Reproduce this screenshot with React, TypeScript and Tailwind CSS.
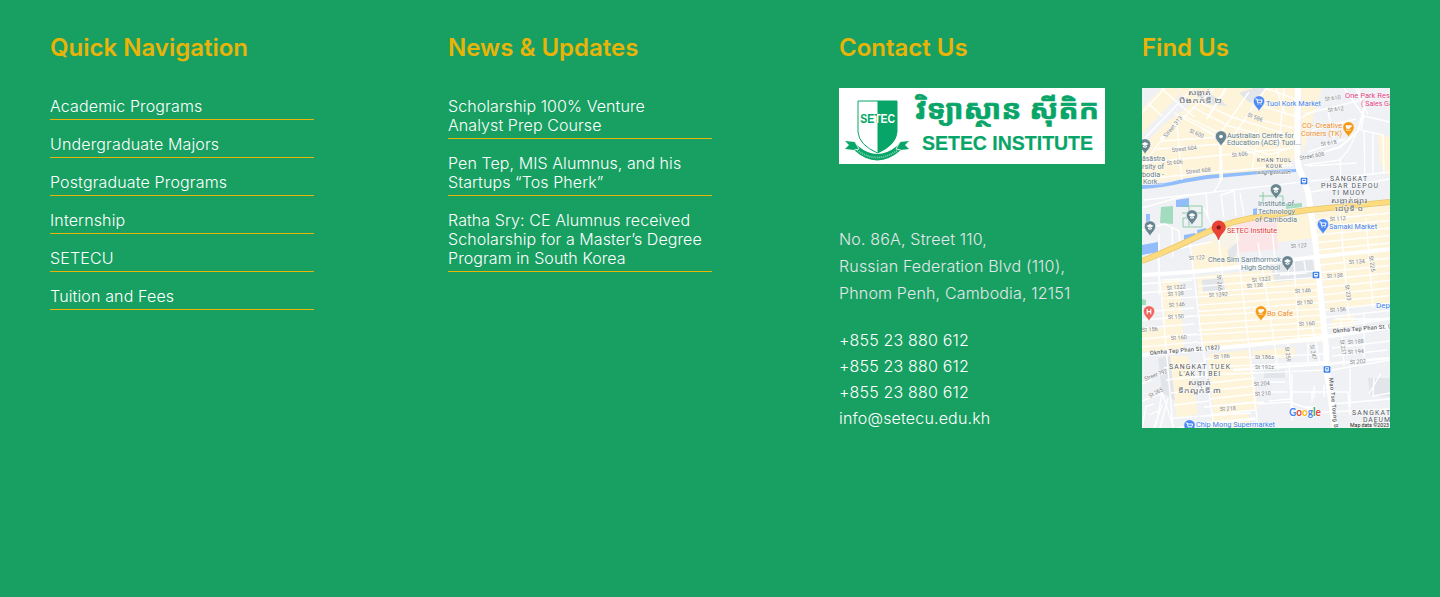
import React from "react";

const links = [
  "Academic Programs",
  "Undergraduate Majors",
  "Postgraduate Programs",
  "Internship",
  "SETECU",
  "Tuition and Fees",
];

const news = [
  ["Scholarship 100% Venture", "Analyst Prep Course"],
  ["Pen Tep, MIS Alumnus, and his", "Startups “Tos Pherk”"],
  ["Ratha Sry: CE Alumnus received", "Scholarship for a Master’s Degree", "Program in South Korea"],
];

const phones = ["+855 23 880 612", "+855 23 880 612", "+855 23 880 612", "info@setecu.edu.kh"];

function Heading({ children }: { children: React.ReactNode }) {
  return <h2 className="text-2xl leading-8 font-semibold text-[#eab308]">{children}</h2>;
}

function Logo() {
  return (
    <svg viewBox="0 0 266 76" className="mt-6 block h-[76px] w-[266px] bg-white">
      <defs>
        <linearGradient id="shield-split" gradientUnits="userSpaceOnUse" x1="38" y1="0" x2="39" y2="0">
          <stop offset="0.5" stopColor="#07a568" />
          <stop offset="0.5" stopColor="#fff" />
        </linearGradient>
      </defs>
      <path d="M19 13H58V44Q57 57 38.5 65Q20 57 19 44Z" fill="#fff" stroke="#07a568" strokeWidth="1" />
      <path d="M38.5 13H58V44Q57 57 38.5 65Z" fill="#07a568" />
      <path d="M6 53L16 54L19 58Q38 74 58 58L61 54L70 53L66 57L70 61L62 62Q38 83 15 62L6 61L10 57Z" fill="#07a568" />
      <path d="M16 54L20 61L15 62M61 54L57 61L62 62" fill="none" stroke="#fff" strokeWidth="0.8" />
      <path d="M18 62Q38 77 59 62" fill="none" stroke="#fff" strokeWidth="2" strokeDasharray="1 1" opacity="0.5" />
      <g fontFamily="Liberation Sans, Arial, sans-serif" fontWeight="700">
        <text x="21.2" y="35" fontSize="13.5" textLength="35" lengthAdjust="spacingAndGlyphs" fill="url(#shield-split)">SETEC</text>
        <text x="83" y="62" fontSize="19.5" textLength="171" lengthAdjust="spacingAndGlyphs" fill="#07a568" stroke="#07a568" strokeWidth="0.2">SETEC INSTITUTE</text>
      </g>
      <text x="76" y="31" fontSize="27" fontWeight="700" fontFamily="Noto Sans Khmer, Noto Sans, sans-serif" textLength="184" lengthAdjust="spacingAndGlyphs" fill="#07a568" stroke="#07a568" strokeWidth="0.6">
        វិទ្យាស្ថាន ស៊ីតិក
      </text>
    </svg>
  );
}

type Label = [text: string, x: number, y: number, width: number, rotate?: number];

const streets: Label[] = [
  ["St 586", 105, 28, 16, 22], ["St 610", 183, 13, 16, -7], ["St 612", 186, 24, 16, -7],
  ["Street 313", 24, 50, 26, -50], ["St 600", 47, 44, 15, 25], ["Street 604", 30, 64, 25, -6],
  ["St 606", 25, 77, 16, -6], ["St 606", 90, 69, 16, -6], ["Street 608", 44, 86, 25, -6],
  ["St 618", 179, 58, 16, -8], ["Street 608", 158, 72, 25, -10],
  ["St 122", 47, 172, 16, -3], ["St 112", 188, 133, 16, -3], ["St 122", 149, 160, 16, -3],
  ["St 134", 207, 176, 16, -3], ["St 1322", 25, 202, 19, -5], ["St 138", 26, 208, 16, -3],
  ["St 1322", 110, 194, 19, -5], ["St 138", 105, 200, 16, -4], ["St 1392", 67, 209, 19, -3],
  ["St 146", 27, 219, 16, -3], ["St 150", 26, 231, 16, -3], ["St 138", 185, 190, 16, -3],
  ["St 146", 153, 205, 16, -3], ["St 150", 155, 217, 16, -4], ["St 156", 188, 224, 16, -3],
  ["St 156", 0, 244, 16, -4], ["St 160", 29, 252, 16, -3], ["St 160", 157, 238, 16, -3],
  ["St 186", 72, 271, 16, -4], ["St 186z", 113, 271, 19], ["St 192z", 113, 281, 19],
  ["St 188", 206, 256, 16, -3], ["St 194", 206, 266, 16, -3], ["St 202", 208, 276, 16, -3],
  ["St 204", 112, 298, 16, -3], ["St 210", 113, 308, 16, -3], ["St 218", 78, 323, 16, -3],
  ["Street 792", 3, 293, 24, -20], ["St 265", 8, 310, 15, -28],
  ["St 265", 75, 187, 16, 86], ["St 225", 227, 168, 16, 82], ["St 233", 203, 197, 16, 82],
  ["St 259", 143, 259, 15, 83], ["St 247", 168, 257, 15, 80], ["St 237", 198, 252, 15, 82],
];

const places: [text: string, x: number, y: number, width: number, color: string][] = [
  ["Tuol Kork Market", 124, 18, 55, "#3f83ef"],
  ["One Park Residence", 203, 10, 67, "#df3d83"],
  ["( Sales Gallery )", 219, 18, 49, "#df3d83"],
  ["CO- Creative", 160, 40, 40, "#f08b20"],
  ["Corners (TK)", 159, 48, 41, "#f08b20"],
  ["Australian Centre for", 85, 50, 67, "#62808c"],
  ["Education (ACE) Tuol...", 85, 57, 74, "#62808c"],
  ["āsāstra", 0, 73, 23, "#62808c"],
  ["rsity of", 0, 81, 22, "#62808c"],
  ["bodia -", 0, 89, 22, "#62808c"],
  ["Kork...", 1, 96, 20, "#62808c"],
  ["Institute of", 116, 118, 36, "#62808c"],
  ["Technology", 116, 126, 37, "#62808c"],
  ["of Cambodia", 113, 134, 42, "#62808c"],
  ["SETEC Institute", 85, 145, 50, "#df3835"],
  ["Samaki Market", 187, 141, 48, "#3f83ef"],
  ["Chea Sim Santhormok", 66, 174, 73, "#62808c"],
  ["High School", 99, 182, 39, "#62808c"],
  ["Bo Café", 125, 228, 26, "#f08b20"],
  ["Depot", 234, 220, 21, "#3f83ef"],
  ["Chip Mong Supermarket", 54, 339, 79, "#3f83ef"],
];

const districts: Label[] = [
  ["SANGKAT", 188, 93, 37], ["PHSAR DEPOU", 179, 100, 57], ["TI MUOY", 190, 107, 33],
  ["SANGKAT TUEK", 27, 281, 61], ["L'AK TI BEI", 37, 288, 41],
  ["SANGKAT", 210, 327, 38], ["DAEUM", 221, 334, 27],
];

const khmer: Label[] = [
  ["សង្កាត់", 46, 7, 23], ["បឹងកក់ទី ២", 37, 15, 43],
  ["សង្កាត់ផ្សារ", 189, 115, 36], ["ដេប៉ូទី ១", 193, 123, 28],
  ["សង្កាត់", 46, 297, 23], ["ទឹកល្អក់ទី ៣", 36, 305, 43],
];

function Pin({ x, y, color, glyph = "dot" }: { x: number; y: number; color: string; glyph?: "dot" | "school" | "cart" | "cup" | "h" }) {
  return (
    <g transform={`translate(${x} ${y})`}>
      <path d="M0 9.5C-1 6-5.7 3.5-5.7-.6A5.7 5.7 0 0 1 5.7-.6C5.7 3.5 1 6 0 9.5Z" fill={color} stroke="#fff" strokeWidth=".6" />
      {glyph === "dot" && <circle r="1.8" cy="-.5" fill="#fff" />}
      {glyph === "school" && <path d="M-3.6-1L0-3L3.6-1L0 1ZM-2 .6V2Q0 3.4 2 2V.6L0 1.8Z" fill="#fff" />}
      {glyph === "cart" && <path d="M-3.3-3H-2L-1.4.8H2.3L3.1-2H-1.7M-1 2.2h.1M2 2.2h.1" fill="none" stroke="#fff" strokeWidth="1" strokeLinecap="round" />}
      {glyph === "cup" && <path d="M-2.7-2.7H3.1V-.8H1.9Q1.7 1-.3 1Q-2.7 1-2.7-1ZM-2.7 1.7H2.2V2.4H-2.7Z" fill="#fff" />}
      {glyph === "h" && <path d="M-1.8-3V2.2M1.8-3V2.2M-1.8-.4H1.8" fill="none" stroke="#fff" strokeWidth="1.1" />}
    </g>
  );
}

function Station({ x, y }: { x: number; y: number }) {
  return (
    <g transform={`translate(${x} ${y})`}>
      <rect x="-3.3" y="-3.3" width="6.6" height="6.6" rx="1" fill="#2574e8" />
      <path d="M-1.8-2H1.8V1.3H-1.8ZM-1.5 2.2H1.5" fill="#fff" stroke="#fff" strokeWidth=".5" />
      <path d="M-1.2-1.2H1.2V0H-1.2Z" fill="#2574e8" />
    </g>
  );
}

function StreetMap() {
  const middle = Array.from({ length: 12 }, (_, i) => 184 + i * 6.3);
  const east = Array.from({ length: 15 }, (_, i) => 132 + i * 7.5);
  const south = Array.from({ length: 11 }, (_, i) => 266 + i * 8);
  return (
    <svg viewBox="0 0 248 340" className="mt-6 block h-[340px] w-[248px]">
      <rect width="248" height="340" fill="#eff1f4" />
      <g fill="#fef4d9">
        <path d="M34 0H153V70L140 81L0 95V58L25 34L48 17Z" />
        <path d="M0 46L38 6L32 0H20L0 20Z" />
        <path d="M160 0H180L168 40L160 68ZM236 45L248 50V90L238 75Z" />
        <path d="M50 160L94 142L96 180L50 182ZM55 188L176 178L183 253L60 262ZM20 192H38L42 262L22 265Z" />
        <path d="M95 138L168 125L172 150L120 156ZM173 125L248 117V215L185 223Z" />
        <path d="M0 240H22V263L0 264ZM26 268H46L56 326L35 330ZM66 266L108 262L116 320L72 330Z" />
        <path d="M110 263L153 259V270H113ZM190 231L212 227V238L190 241ZM70 328L106 325L110 340H68Z" />
      </g>
      <g fill="#e2e5ea">
        <path d="M85 156L96 154L94 168L87 173ZM128 177L170 171L174 190L133 194Z" />
        <path d="M60 192L81 190L83 202L61 204ZM226 290H248V309L228 307ZM122 283L143 282V290H122Z" />
        <path d="M16 270L28 268L33 313L20 304ZM97 5L112 0H125L108 15ZM50 2L69 6L86 18L64 16Z" />
      </g>
      <path d="M94 134L134 127L136 161L95 165Z" fill="#fbe5e7" />
      <path d="M68 138L82 132L94 139L98 152L86 162L69 152Z" fill="#f7f3e7" />
      <path d="M0 97Q20 97 41 91L65 87L128 82L154 81V84L128 85L65 91L41 95Q20 100 0 101Z" fill="#91bdfb" />
      <path d="M0 157L16 154L16 164L0 167ZM34 112L47 110V119H34ZM4 126H8V135H4ZM42 147L53 145L54 149L42 152ZM55 142L64 140V145L56 148ZM111 121L115 120V127H111Z" fill="#91bdfb" />
      <path d="M19 119L31 118V136L18 135ZM0 211L4 212V217H0ZM144 116L160 115V119L144 121Z" fill="#a2dbbd" />
      <path d="M40 118H60V139H41V130H54M47 119V138M117 108H141V117H150M40 125H60M121 104V114" fill="none" stroke="#85c99c" strokeWidth="0.9" />
      <g fill="none" stroke="#fff" strokeWidth="1.35">
        {middle.map((y, i) => (
          <path key={i} d={`M${i % 3 ? 56 : 20} ${y + 8}L${176 + i * 0.6} ${y - 1}`} />
        ))}
        {east.map((y, i) => (
          <path key={i} d={`M${173 + i * 0.7} ${y}L248 ${y - 7}`} />
        ))}
        {south.map((y, i) => (
          <path key={i} d={`M${62 + (i % 2) * 5} ${y + 5}L${i < 3 ? 185 : 113} ${y}`} />
        ))}
        <path d="M0 196L50 192M0 205L50 201M0 224L52 220M0 232L52 228M0 240L52 236M0 251L55 246M0 259L56 254M22 280L62 275M24 292L62 288M29 305L64 300M32 317L67 313" />
        <path d="M0 25L23 0M0 53L51 0M0 77L26 44L73 0M19 0L52 29M32 25L81 51L127 67L151 59M40 27L78 45M50 19L87 38L140 53M53 12L90 29L152 49M18 51L35 36L40 92M78 49V93M20 53L77 49M15 61L130 52M0 75L150 60M0 91L150 77M80 43L107 4M90 50L124 0M110 30L151 40M117 17L153 28M123 0L153 11M134 0L144 27M142 0L135 80M117 40L110 82M59 41L132 75M6 15L20 28" />
        <path d="M2 112L248 84M0 120L42 108L66 105L72 104L79 92M66 130L64 105M82 130L79 107L92 103L94 128M98 105L102 127M0 142L23 136L37 143L38 157M17 146V207M30 140L31 169M62 120L71 140M39 160L69 154" />
        <path d="M16 171L22 235L31 340M48 155L60 255L72 340M76 144L81 190M94 140L98 182L107 258L116 340M116 155L120 177L130 240L136 282M130 140L134 185M152 174L157 252M198 125L207 230M224 130L231 220M138 187L164 185L162 173M147 175L146 188" />
        <path d="M163 26L219 12M170 42L214 31M166 64L203 51M162 77L198 72L207 61L216 42M202 0L222 28L219 42L241 47L242 84M222 28L248 34M222 42L223 98M186 24L192 50M198 70L199 97M231 46V86M166 78L215 75M163 105L248 91M155 32L178 20M213 0L226 26" />
        <path d="M193 231H248M190 260L248 253M190 268L245 262M190 282L248 272M199 231L202 278M222 226V269M166 255V274M146 254L150 333M186 240L248 231M170 238L178 274M123 294H143M123 304H145M151 304H206L208 327M208 281V319M150 286V321M170 303V314M182 297V309M127 313L148 311M164 319H172M172 298V310" />
        <path d="M0 313L20 305L14 338M20 304L31 338M3 319L12 316M7 327L16 323M20 317L12 340M26 310L18 340M0 296L27 283M4 319L0 340M31 330L109 325M62 319L122 314M116 316L147 314L177 324M35 340L114 331M147 326L248 321M190 316L248 311M232 290L231 308L248 305M239 285L227 306" />
      </g>
      <g fill="none" stroke="#fff">
        <path d="M0 187Q72 183 102 178T248 161M0 267L40 263L100 258L176 250L248 239" strokeWidth="4" />
        <path d="M91 282L184 276L248 270" strokeWidth="2.5" />
        <path d="M156 0L155 56L156 77L166 104L173 151L184 259L185 285L193 340" strokeWidth="6" />
        <path d="M216 0L222 21L216 43L198 59L162 70M78 51L80 92M65 31L84 0" strokeWidth="2.2" />
      </g>
      <path d="M0 173Q31 161 61 146T124 128L166 122L248 114" fill="none" stroke="#e7c36e" strokeWidth="6" />
      <path d="M0 173Q31 161 61 146T124 128L166 122L248 114" fill="none" stroke="#fddc80" strokeWidth="4.7" />
      <g fontFamily="Roboto, sans-serif" stroke="#fff" strokeOpacity=".7" strokeWidth="1" paintOrder="stroke" strokeLinejoin="round">
        <g fontSize="5.8" fill="#7b7f85">
          {streets.map(([text, x, y, width, rotate = 0], i) => (
            <text key={i} x={x} y={y} textLength={width} lengthAdjust="spacingAndGlyphs" transform={`rotate(${rotate} ${x} ${y})`}>{text}</text>
          ))}
        </g>
        <g fontSize="5.8" fill="#5c6065" fontWeight="500">
          <text x="8" y="267" textLength="70" transform="rotate(-5 8 267)">Oknha Tep Phan St. (182)</text>
          <text x="191" y="245" textLength="70" transform="rotate(-5 191 245)">Oknha Tep Phan St. (182)</text>
          <text x="187" y="290" textLength="59" transform="rotate(84 187 290)">Mao Tse Toung Blvd</text>
        </g>
        <g fontSize="6.9" fill="#53585f">
          {districts.map(([text, x, y, width], i) => (
            <text key={i} x={x} y={y} textLength={width}>{text}</text>
          ))}
          <text x="115" y="74" fontSize="5.3" textLength="34">KHAN TUOL</text>
          <text x="124" y="80" fontSize="5.3" textLength="16">KOUK</text>
        </g>
        <g fontSize="6.5" fill="#6b6f74" fontFamily="Noto Sans Khmer, Noto Sans, sans-serif">
          {khmer.map(([text, x, y, width], i) => (
            <text key={i} x={x} y={y} textLength={width} lengthAdjust="spacingAndGlyphs">{text}</text>
          ))}
          <text x="115" y="85.5" fontSize="4.6" textLength="34" lengthAdjust="spacingAndGlyphs">ខណ្ឌទួលគោក</text>
        </g>
        <g fontSize="7.2">
          {places.map(([text, x, y, width, color], i) => (
            <text key={i} x={x} y={y} fill={color} textLength={width} lengthAdjust="spacingAndGlyphs">{text}</text>
          ))}
        </g>
      </g>
      <Pin x={117} y={14} color="#4d89f3" glyph="cart" />
      <Pin x={206.5} y={40} color="#f49a16" glyph="cup" />
      <Pin x={79} y={49} color="#688590" />
      <Pin x={3} y={57} color="#688590" glyph="school" />
      <Pin x={134} y={102} color="#688590" glyph="school" />
      <Pin x={50} y={128} color="#688590" glyph="school" />
      <Pin x={8} y={139} color="#688590" glyph="school" />
      <Pin x={145.5} y={174} color="#688590" glyph="school" />
      <Pin x={181} y={137} color="#4d89f3" glyph="cart" />
      <Pin x={119} y={224} color="#f49a16" glyph="cup" />
      <Pin x={7} y={224} color="#ee6660" glyph="h" />
      <Pin x={47.5} y={338} color="#4d89f3" glyph="cart" />
      <path d="M76.5 152C75 146 70 144 70 139.5A6.7 6.7 0 0 1 83.4 139.5C83.4 144 78 146 76.5 152Z" fill="#ea4335" stroke="#c52e28" strokeWidth=".5" />
      <circle cx="76.7" cy="139.4" r="2.2" fill="#8c1a18" />
      <Station x={162} y={93} />
      <Station x={174} y={187} />
      <Station x={185} y={281.5} />
      <text x="147" y="328" fontFamily="Lato, sans-serif" fontWeight="700" fontSize="10.8" textLength="32" lengthAdjust="spacingAndGlyphs" stroke="#fff" strokeWidth="1" paintOrder="stroke">
        <tspan fill="#4285f4">G</tspan><tspan fill="#ea4335">o</tspan><tspan fill="#fbbc05">o</tspan><tspan fill="#4285f4">g</tspan><tspan fill="#34a853">l</tspan><tspan fill="#ea4335">e</tspan>
      </text>
      <rect x="206" y="335" width="42" height="5" fill="#f5f5f5" opacity=".8" />
      <text x="208" y="339" fontFamily="Roboto, sans-serif" fontSize="5.2" fill="#222" textLength="39" lengthAdjust="spacingAndGlyphs">Map data ©2023</text>
    </svg>
  );
}

export default function App() {
  return (
    <footer className="flex h-[597px] w-[1440px] items-start overflow-hidden bg-[#18a062] px-[50px] pt-8 font-['Inter',sans-serif] text-base text-white">
      <section className="w-[398px] shrink-0">
        <Heading>Quick Navigation</Heading>
        <ul className="mt-[33px] flex w-66 flex-col gap-[15px]">
          {links.map((link) => (
            <li key={link} className="h-[23px] border-b border-[#eab308] leading-[19px] font-light tracking-[0.14px] whitespace-nowrap">
              {link}
            </li>
          ))}
        </ul>
      </section>
      <section className="w-[391px] shrink-0">
        <Heading>News &amp; Updates</Heading>
        <ul className="mt-[33px] flex w-66 flex-col gap-[15px]">
          {news.map((lines) => (
            <li key={lines[0]} className="border-b border-[#eab308] pb-[3px] leading-[19px] font-light tracking-[0.08px] whitespace-nowrap">
              {lines.map((line) => <div key={line}>{line}</div>)}
            </li>
          ))}
        </ul>
      </section>
      <section className="w-[303px] shrink-0">
        <Heading>Contact Us</Heading>
        <Logo />
        <address className="mt-[62px] leading-[27px] font-light tracking-[0.17px] text-gray-200 not-italic">
          <div>No. 86A, Street 110,</div>
          <div>Russian Federation Blvd (110),</div>
          <div>Phnom Penh, Cambodia, 12151</div>
        </address>
        <div className="mt-5 leading-[26px] font-light tracking-[0.17px]">
          {phones.map((line, i) => <div key={i}>{line}</div>)}
        </div>
      </section>
      <section className="w-[248px] shrink-0">
        <Heading>Find Us</Heading>
        <StreetMap />
      </section>
    </footer>
  );
}
